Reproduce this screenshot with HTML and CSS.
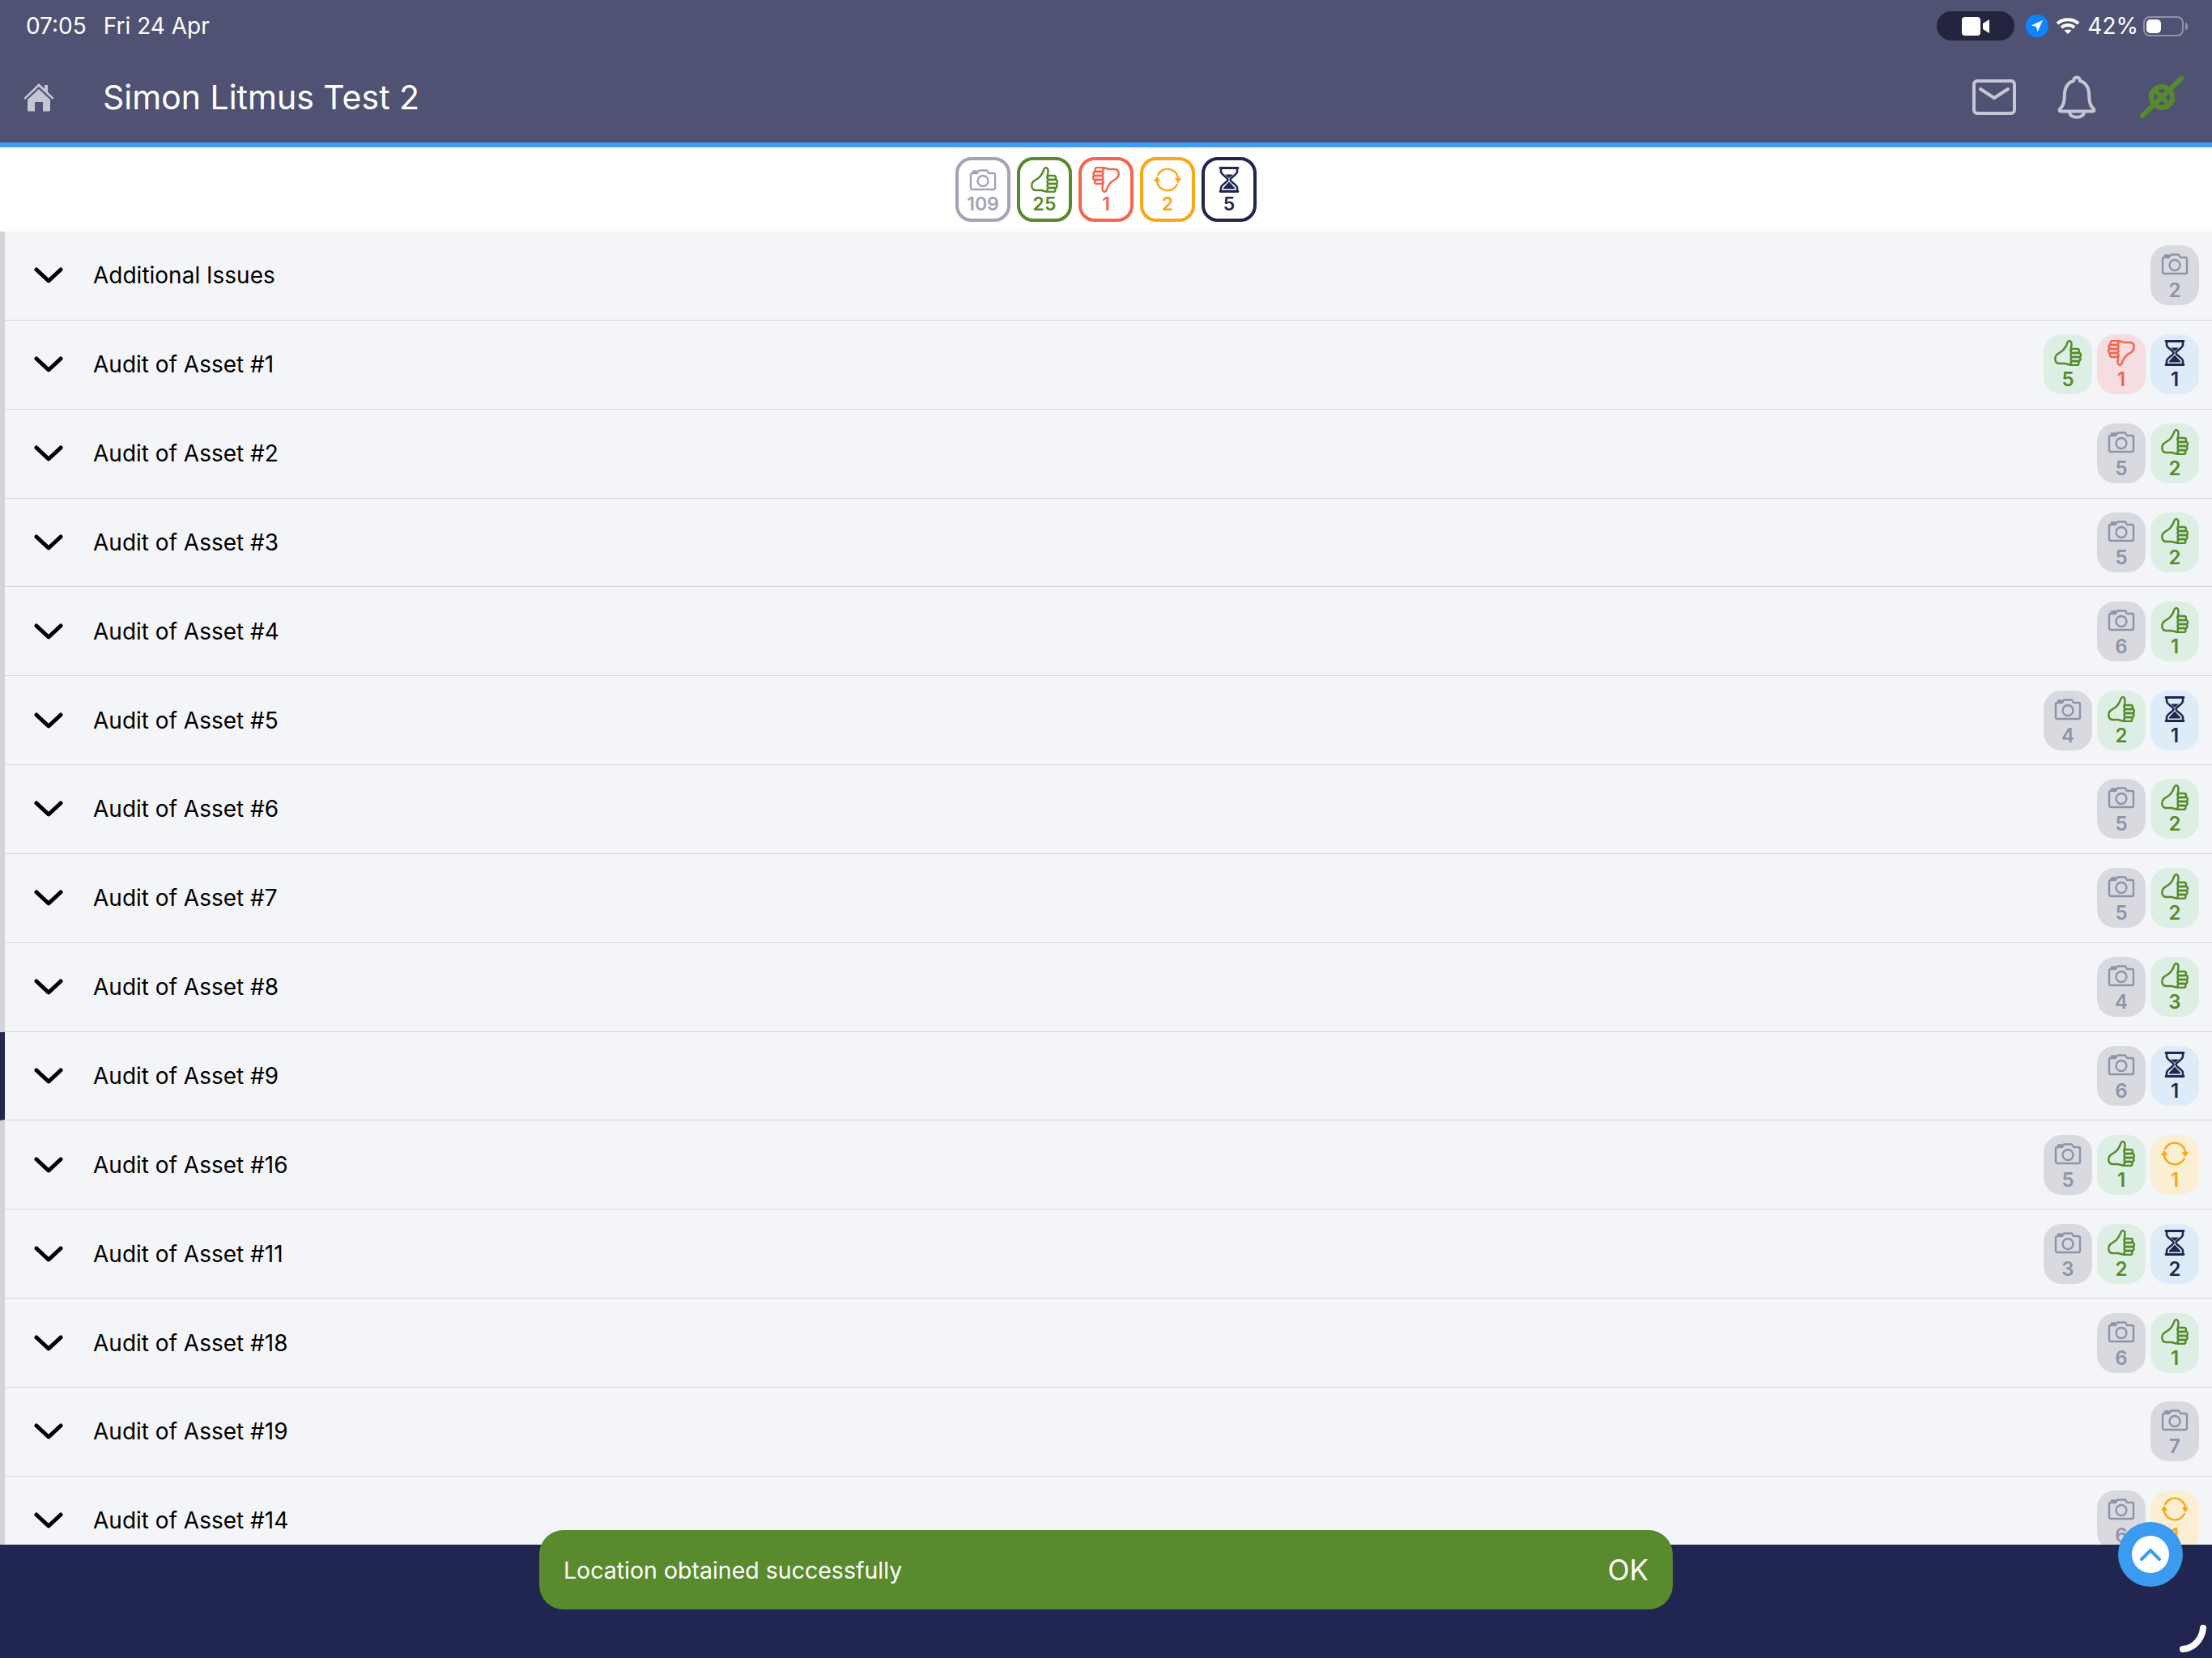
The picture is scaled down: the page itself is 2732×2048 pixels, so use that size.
FILE: index.html
```html
<!DOCTYPE html>
<html lang="en">
<head>
    <meta charset="UTF-8">
    <title>Simon Litmus Test 2</title>
    <link rel="stylesheet" href="styles.css">
</head>
<body>
    <svg class="sprites" xmlns="http://www.w3.org/2000/svg">
        <symbol id="cam" viewBox="0 0 34 32">
            <path d="M4 8H10L12 4.500H22L24 8H30a2 2 0 0 1 2 2V26a2 2 0 0 1-2 2H4a2 2 0 0 1-2-2V10a2 2 0 0 1 2-2zM5 7V5.500H9V7"/>
            <circle cx="17" cy="17.500" r="6.500"/>
        </symbol>
        <symbol id="up" viewBox="0 0 34 32">
            <path d="M20.500 13L21.500 6C22 1 18 -0.500 16.500 3C15 7.500 13.500 10.500 10 13.500L4 17.500C1.500 19.500 1 22 1.500 25C2 28 4 29 7 29H13L20.500 31"/>
            <rect x="20.500" y="11" width="10.500" height="5" rx="2.500"/>
            <rect x="20.500" y="16" width="12.500" height="5" rx="2.500"/>
            <rect x="20.500" y="21" width="12" height="5" rx="2.500"/>
            <rect x="20.500" y="26" width="10" height="5" rx="2.500"/>
        </symbol>
        <symbol id="down" viewBox="0 0 34 32">
            <g transform="rotate(180 17 16)">
                <path d="M20.500 13L21.500 6C22 1 18 -0.500 16.500 3C15 7.500 13.500 10.500 10 13.500L4 17.500C1.500 19.500 1 22 1.500 25C2 28 4 29 7 29H13L20.500 31"/>
                <rect x="20.500" y="11" width="10.500" height="5" rx="2.500"/>
                <rect x="20.500" y="16" width="12.500" height="5" rx="2.500"/>
                <rect x="20.500" y="21" width="12" height="5" rx="2.500"/>
                <rect x="20.500" y="26" width="10" height="5" rx="2.500"/>
            </g>
        </symbol>
        <symbol id="sync" viewBox="0 0 34 32">
            <path d="M5.100 10A13.300 13.300 0 0 1 30.150 14"/>
            <path d="M28.900 22A13.300 13.300 0 0 1 3.850 18"/>
            <path class="solid" d="M26 14H34L30 20.500zM0 18H8L4 11.500z"/>
        </symbol>
        <symbol id="hour" viewBox="0 0 34 32">
            <path stroke-width="2.800" d="M6 1.500H28M6 30.500H28"/>
            <path stroke-width="2.600" d="M7 2V6C7 10 15.500 13 15.500 16C15.500 19 7 22 7 26V30M27 2V6C27 10 18.500 13 18.500 16C18.500 19 27 22 27 26V30"/>
            <path class="solid" d="M12 9.500H22L17 14zM17 18.500L24 26V27.500H10V26z"/>
        </symbol>
        <symbol id="chev" viewBox="0 0 36 20">
            <path d="M3 3L18 17L33 3"/>
        </symbol>
    </svg>

    <header class="topbar">
        <div class="status">
            <div class="status-left">
                <span>07:05</span>
                <span>Fri 24 Apr</span>
            </div>
            <div class="status-right">
                <div class="video-pill">
                    <svg width="34" height="23" viewBox="0 0 34 23"><rect x="0" y="0" width="23" height="23" rx="4" fill="#fff"/><path d="M26 8L34 3V20L26 15z" fill="#fff"/></svg>
                </div>
                <svg width="28" height="28" viewBox="0 0 28 28"><circle cx="14" cy="14" r="14" fill="#0a84ff"/><path d="M21 7L6.500 13.500L13 15L14.500 21.500z" fill="#fff"/></svg>
                <svg width="30" height="22" viewBox="0 0 30 22" class="wifi"><path d="M2 8C9 1.500 21 1.500 28 8M7 13C11.500 9 18.500 9 23 13"/><path d="M15 21L10.500 16.500C13 15 17 15 19.500 16.500z" class="wifi-dot"/></svg>
                <span class="battery-pct">42%</span>
                <div class="battery"><div class="battery-fill"></div></div>
            </div>
        </div>
        <div class="nav">
            <svg class="home" width="38" height="36" viewBox="0 0 38 36"><path d="M19 1L0.500 19L2 21L19 5L36 21L37.500 19L30 11.500V3H26V7.500z"/><path d="M19 8L5 21V34a1.500 1.500 0 0 0 1.500 1.500H14V24H24V35.500H31.500A1.500 1.500 0 0 0 33 34V21z"/></svg>
            <div class="page-title">Simon Litmus Test 2</div>
            <div class="nav-icons">
                <svg width="54" height="44" viewBox="0 0 54 44" class="nav-line"><rect x="2" y="2" width="50" height="40" rx="4"/><path d="M10 12L27 23L44 12"/></svg>
                <svg width="48" height="54" viewBox="0 0 48 54" class="nav-line"><path d="M3 42C9 36 8.500 30 9 22C9.500 13 15 8 20 7C20.500 1 27.500 1 28 7C33 8 38.500 13 39 22C39.500 30 39 36 45 42C46 44 45 44.500 43 44.500H5C3 44.500 2 44 3 42z"/><path d="M15 45C15 54 33 54 33 45"/></svg>
                <svg width="54" height="52" viewBox="0 0 54 52" class="nav-plug"><path d="M3 49L51 3"/><circle cx="27" cy="26" r="13"/><path d="M18 17L36 35"/><path d="M14 22L20 15M34 37L40 30"/></svg>
            </div>
        </div>
    </header>

    <div class="totals">
        <div class="stat c-cam"><svg class="ico"><use href="#cam"/></svg><span>109</span></div>
        <div class="stat c-up"><svg class="ico"><use href="#up"/></svg><span>25</span></div>
        <div class="stat c-down"><svg class="ico"><use href="#down"/></svg><span>1</span></div>
        <div class="stat c-sync"><svg class="ico"><use href="#sync"/></svg><span>2</span></div>
        <div class="stat c-hour"><svg class="ico"><use href="#hour"/></svg><span>5</span></div>
    </div>

    <main class="list">
        <div class="row">
            <svg class="chev"><use href="#chev"/></svg>
            <div class="row-name">Additional Issues</div>
            <div class="chips">
                <div class="chip c-cam"><svg class="ico"><use href="#cam"/></svg><span>2</span></div>
            </div>
        </div>
        <div class="row">
            <svg class="chev"><use href="#chev"/></svg>
            <div class="row-name">Audit of Asset #1</div>
            <div class="chips">
                <div class="chip c-up"><svg class="ico"><use href="#up"/></svg><span>5</span></div>
                <div class="chip c-down"><svg class="ico"><use href="#down"/></svg><span>1</span></div>
                <div class="chip c-hour"><svg class="ico"><use href="#hour"/></svg><span>1</span></div>
            </div>
        </div>
        <div class="row">
            <svg class="chev"><use href="#chev"/></svg>
            <div class="row-name">Audit of Asset #2</div>
            <div class="chips">
                <div class="chip c-cam"><svg class="ico"><use href="#cam"/></svg><span>5</span></div>
                <div class="chip c-up"><svg class="ico"><use href="#up"/></svg><span>2</span></div>
            </div>
        </div>
        <div class="row">
            <svg class="chev"><use href="#chev"/></svg>
            <div class="row-name">Audit of Asset #3</div>
            <div class="chips">
                <div class="chip c-cam"><svg class="ico"><use href="#cam"/></svg><span>5</span></div>
                <div class="chip c-up"><svg class="ico"><use href="#up"/></svg><span>2</span></div>
            </div>
        </div>
        <div class="row">
            <svg class="chev"><use href="#chev"/></svg>
            <div class="row-name">Audit of Asset #4</div>
            <div class="chips">
                <div class="chip c-cam"><svg class="ico"><use href="#cam"/></svg><span>6</span></div>
                <div class="chip c-up"><svg class="ico"><use href="#up"/></svg><span>1</span></div>
            </div>
        </div>
        <div class="row">
            <svg class="chev"><use href="#chev"/></svg>
            <div class="row-name">Audit of Asset #5</div>
            <div class="chips">
                <div class="chip c-cam"><svg class="ico"><use href="#cam"/></svg><span>4</span></div>
                <div class="chip c-up"><svg class="ico"><use href="#up"/></svg><span>2</span></div>
                <div class="chip c-hour"><svg class="ico"><use href="#hour"/></svg><span>1</span></div>
            </div>
        </div>
        <div class="row">
            <svg class="chev"><use href="#chev"/></svg>
            <div class="row-name">Audit of Asset #6</div>
            <div class="chips">
                <div class="chip c-cam"><svg class="ico"><use href="#cam"/></svg><span>5</span></div>
                <div class="chip c-up"><svg class="ico"><use href="#up"/></svg><span>2</span></div>
            </div>
        </div>
        <div class="row">
            <svg class="chev"><use href="#chev"/></svg>
            <div class="row-name">Audit of Asset #7</div>
            <div class="chips">
                <div class="chip c-cam"><svg class="ico"><use href="#cam"/></svg><span>5</span></div>
                <div class="chip c-up"><svg class="ico"><use href="#up"/></svg><span>2</span></div>
            </div>
        </div>
        <div class="row">
            <svg class="chev"><use href="#chev"/></svg>
            <div class="row-name">Audit of Asset #8</div>
            <div class="chips">
                <div class="chip c-cam"><svg class="ico"><use href="#cam"/></svg><span>4</span></div>
                <div class="chip c-up"><svg class="ico"><use href="#up"/></svg><span>3</span></div>
            </div>
        </div>
        <div class="row row-current">
            <svg class="chev"><use href="#chev"/></svg>
            <div class="row-name">Audit of Asset #9</div>
            <div class="chips">
                <div class="chip c-cam"><svg class="ico"><use href="#cam"/></svg><span>6</span></div>
                <div class="chip c-hour"><svg class="ico"><use href="#hour"/></svg><span>1</span></div>
            </div>
        </div>
        <div class="row">
            <svg class="chev"><use href="#chev"/></svg>
            <div class="row-name">Audit of Asset #16</div>
            <div class="chips">
                <div class="chip c-cam"><svg class="ico"><use href="#cam"/></svg><span>5</span></div>
                <div class="chip c-up"><svg class="ico"><use href="#up"/></svg><span>1</span></div>
                <div class="chip c-sync"><svg class="ico"><use href="#sync"/></svg><span>1</span></div>
            </div>
        </div>
        <div class="row">
            <svg class="chev"><use href="#chev"/></svg>
            <div class="row-name">Audit of Asset #11</div>
            <div class="chips">
                <div class="chip c-cam"><svg class="ico"><use href="#cam"/></svg><span>3</span></div>
                <div class="chip c-up"><svg class="ico"><use href="#up"/></svg><span>2</span></div>
                <div class="chip c-hour"><svg class="ico"><use href="#hour"/></svg><span>2</span></div>
            </div>
        </div>
        <div class="row">
            <svg class="chev"><use href="#chev"/></svg>
            <div class="row-name">Audit of Asset #18</div>
            <div class="chips">
                <div class="chip c-cam"><svg class="ico"><use href="#cam"/></svg><span>6</span></div>
                <div class="chip c-up"><svg class="ico"><use href="#up"/></svg><span>1</span></div>
            </div>
        </div>
        <div class="row">
            <svg class="chev"><use href="#chev"/></svg>
            <div class="row-name">Audit of Asset #19</div>
            <div class="chips">
                <div class="chip c-cam"><svg class="ico"><use href="#cam"/></svg><span>7</span></div>
            </div>
        </div>
        <div class="row">
            <svg class="chev"><use href="#chev"/></svg>
            <div class="row-name">Audit of Asset #14</div>
            <div class="chips">
                <div class="chip c-cam"><svg class="ico"><use href="#cam"/></svg><span>6</span></div>
                <div class="chip c-sync"><svg class="ico"><use href="#sync"/></svg><span>1</span></div>
            </div>
        </div>
    </main>

    <footer class="bottombar"></footer>

    <div class="toast">
        <span class="toast-msg">Location obtained successfully</span>
        <span class="toast-ok">OK</span>
    </div>

    <div class="scroll-top">
        <div class="scroll-top-inner">
            <svg width="26" height="16" viewBox="0 0 26 16"><path d="M2 14L13 3L24 14"/></svg>
        </div>
    </div>

    <svg class="pencil-mark" width="34" height="34" viewBox="0 0 34 34"><path d="M30 4C29 16 20 29 5 30"/></svg>
</body>
</html>
```

FILE: styles.css
```css
* { box-sizing: border-box; }

html, body {
    margin: 0;
    height: 2048px;
    overflow: hidden;
}

body {
    display: flex;
    flex-direction: column;
    position: relative;
    font-family: Inter, "Liberation Sans", sans-serif;
    background: #f4f5f9;
    color: #000;
}

.sprites { display: none; }

/* header */
.topbar {
    height: 182px;
    flex-shrink: 0;
    background: #4f5273;
    border-bottom: 6px solid #3d9df0;
    color: #fff;
}
.status {
    height: 64px;
    display: flex;
    justify-content: space-between;
    align-items: center;
    padding: 0 35px 0 32px;
    font-size: 28px;
}
.status-left { display: flex; gap: 21px; }
.status-right { display: flex; align-items: center; gap: 9px; }
.video-pill {
    width: 96px;
    height: 36px;
    margin-right: 5px;
    border-radius: 18px;
    background: #23253d;
    display: flex;
    align-items: center;
    justify-content: center;
}
.wifi { fill: none; stroke: #fff; stroke-width: 4; }
.wifi-dot { fill: #fff; stroke: none; }
.battery-pct { margin-right: -3px; }
.battery {
    width: 50px;
    height: 25px;
    border: 2px solid #8f91aa;
    border-radius: 8px;
    padding: 2px;
    position: relative;
}
.battery::after {
    content: "";
    position: absolute;
    right: -7px;
    top: 6px;
    width: 3px;
    height: 9px;
    background: #8f91aa;
    border-radius: 0 3px 3px 0;
}
.battery-fill {
    width: 18px;
    height: 100%;
    background: #fff;
    border-radius: 5px;
}
.nav {
    height: 112px;
    display: flex;
    align-items: center;
    padding: 0 35px 0 29px;
}
.home { fill: #c5c6d4; margin-right: 60px; }
.page-title { font-size: 41px; flex: 1; }
.nav-icons { display: flex; align-items: center; gap: 51px; }
.nav-line {
    fill: none;
    stroke: #c5c6d4;
    stroke-width: 4;
    stroke-linecap: round;
    stroke-linejoin: round;
}
.nav-plug {
    fill: none;
    stroke: #578a2d;
    stroke-width: 6;
    stroke-linecap: round;
    margin-left: 3px;
}

/* totals strip */
.totals {
    height: 104px;
    flex-shrink: 0;
    background: #fff;
    display: flex;
    justify-content: center;
    align-items: center;
    gap: 8px;
}

.ico {
    width: 34px;
    height: 32px;
    fill: none;
    stroke: currentColor;
    stroke-width: 2.400;
    stroke-linejoin: round;
    stroke-linecap: round;
    display: block;
    overflow: visible;
}
.solid { fill: currentColor; stroke: none; }

.stat {
    width: 68px;
    height: 80px;
    border: 4px solid currentColor;
    border-radius: 20px;
    background: #fff;
    display: flex;
    flex-direction: column;
    align-items: center;
    padding-top: 8px;
}
.stat span {
    font-size: 23px;
    font-weight: 600;
    line-height: 24px;
    margin-top: 2px;
}

.c-cam { color: #a1a4b8; }
.c-up { color: #578a2d; }
.c-down { color: #f2654f; }
.c-sync { color: #f9a717; }
.c-hour { color: #20264f; }

/* rows */
.list {
    flex: 1;
    min-height: 0;
    overflow: hidden;
}
.row {
    height: 109.850px;
    display: flex;
    align-items: center;
    padding: 0 16px 0 36px;
    border-left: 6px solid #d3d4d8;
    border-bottom: 1px solid #d5d6dc;
}
.row-current { border-left-color: #20264f; }
.chev {
    width: 36px;
    height: 20px;
    flex-shrink: 0;
    fill: none;
    stroke: #000;
    stroke-width: 5;
    stroke-linecap: round;
    stroke-linejoin: round;
    margin-right: 37px;
}
.row-name { flex: 1; font-size: 28px; }

.chips { display: flex; gap: 6px; }
.chip {
    width: 60px;
    height: 74px;
    border-radius: 22px;
    display: flex;
    flex-direction: column;
    align-items: center;
    padding-top: 7px;
}
.chip span {
    font-size: 24px;
    font-weight: 600;
    line-height: 24px;
    margin-top: 5px;
}
.chip.c-cam { background: #d9dae0; color: #8f92a8; }
.chip.c-up { background: #ddefe4; }
.chip.c-down { background: #f5dde2; }
.chip.c-sync { background: #faeed3; }
.chip.c-hour { background: #deecf9; }

.bottombar {
    height: 140px;
    flex-shrink: 0;
    background: #20264f;
}

/* overlays */
.toast {
    position: absolute;
    left: 666px;
    top: 1890px;
    width: 1400px;
    height: 98px;
    background: #598a2e;
    border-radius: 30px;
    display: flex;
    justify-content: space-between;
    align-items: center;
    padding: 0 30px;
    color: #fff;
}
.toast-msg { font-size: 28.500px; }
.toast-ok { font-size: 35px; }

.scroll-top {
    position: absolute;
    left: 2616px;
    top: 1880px;
    width: 80px;
    height: 80px;
    border-radius: 50%;
    background: #3a9bef;
    display: flex;
    align-items: center;
    justify-content: center;
}
.scroll-top-inner {
    width: 46px;
    height: 46px;
    border-radius: 50%;
    background: #fff;
    display: flex;
    align-items: center;
    justify-content: center;
}
.scroll-top-inner svg {
    fill: none;
    stroke: #3a9bef;
    stroke-width: 4;
    stroke-linecap: round;
}

.pencil-mark {
    position: absolute;
    left: 2691px;
    top: 2007px;
    fill: none;
    stroke: #fff;
    stroke-width: 8;
    stroke-linecap: round;
}
```
